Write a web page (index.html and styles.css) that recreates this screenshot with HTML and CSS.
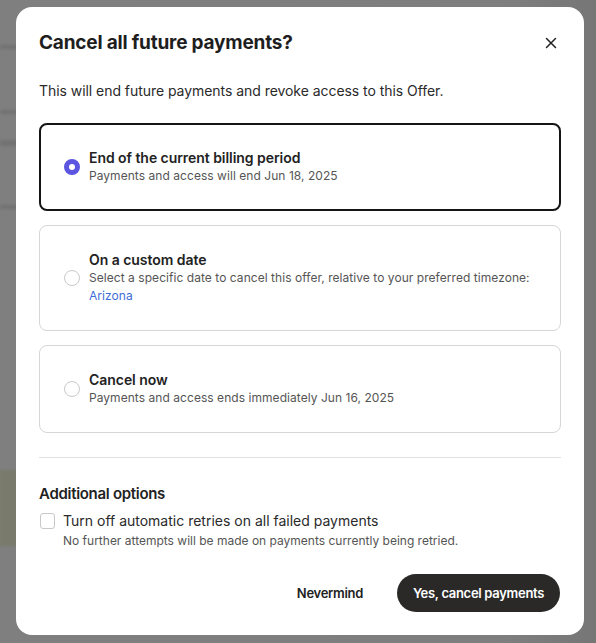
FILE: index.html
```html
<!DOCTYPE html>
<html lang="en">
<head>
<meta charset="utf-8">
<title>Cancel all future payments?</title>
<link rel="stylesheet" href="styles.css">
</head>
<body>
<div class="page">
  <div class="page-line l1"></div>
  <div class="page-line l2"></div>
  <div class="page-line l3"></div>
  <div class="page-line l4"></div>
  <div class="page-card"></div>
</div>
<div class="overlay">
  <div class="modal">
    <div class="modal-header">
      <h2 class="modal-title">Cancel all future payments?</h2>
      <button class="close-btn" aria-label="Close">
        <svg width="12" height="12" viewBox="0 0 12 12"><path d="M1.5 1.5L10.5 10.5M10.5 1.5L1.5 10.5" stroke="#222" stroke-width="1.5" stroke-linecap="round"/></svg>
      </button>
    </div>
    <p class="modal-desc">This will end future payments and revoke access to this Offer.</p>
    <div class="options">
      <label class="option selected">
        <span class="radio checked"></span>
        <span class="option-text">
          <span class="option-title">End of the current billing period</span>
          <span class="option-sub">Payments and access will end Jun 18, 2025</span>
        </span>
      </label>
      <label class="option">
        <span class="radio"></span>
        <span class="option-text">
          <span class="option-title">On a custom date</span>
          <span class="option-sub">Select a specific date to cancel this offer, relative to your preferred timezone:<br><a class="link" href="#">Arizona</a></span>
        </span>
      </label>
      <label class="option">
        <span class="radio"></span>
        <span class="option-text">
          <span class="option-title">Cancel now</span>
          <span class="option-sub">Payments and access ends immediately Jun 16, 2025</span>
        </span>
      </label>
    </div>
    <hr class="divider">
    <h3 class="section-title">Additional options</h3>
    <label class="check-row">
      <span class="checkbox"></span>
      <span class="check-text">
        <span class="check-title">Turn off automatic retries on all failed payments</span>
        <span class="check-sub">No further attempts will be made on payments currently being retried.</span>
      </span>
    </label>
    <div class="actions">
      <button class="btn btn-ghost">Nevermind</button>
      <button class="btn btn-primary">Yes, cancel payments</button>
    </div>
  </div>
</div>
</body>
</html>
```

FILE: styles.css
```css
* { box-sizing: border-box; }
html, body { margin: 0; padding: 0; }
body {
  width: 596px;
  height: 643px;
  overflow: hidden;
  background: #7d7d7d;
  font-family: Inter, "Noto Sans", sans-serif;
  color: #222;
}
.page {
  position: absolute;
  inset: 0;
  background: linear-gradient(90deg, #7f7f7f 0%, #7e7e7e 85%, #767676 100%);
}
.page-line {
  position: absolute;
  left: 0;
  width: 20px;
  height: 4px;
  background: #727272;
  filter: blur(1.5px);
}
.l1 { top: 45px; }
.l2 { top: 110px; }
.l3 { top: 140px; height: 6px; }
.l4 { top: 205px; }
.page-card {
  position: absolute;
  left: 0;
  top: 470px;
  width: 20px;
  height: 76px;
  background: #7a7a6c;
  filter: blur(1px);
}
.overlay {
  position: fixed;
  inset: 0;
  display: flex;
  justify-content: flex-start;
  padding: 7px 0 0 16px;
}
.modal {
  width: 568px;
  height: 628px;
  background: #fff;
  border-radius: 16px;
  padding: 24px 23px 0 23px;
  display: flex;
  flex-direction: column;
}
.modal-header {
  display: flex;
  align-items: center;
  justify-content: space-between;
  height: 24px;
}
.modal-title {
  margin: 0;
  font-size: 19px;
  font-weight: 700;
  letter-spacing: -0.2px;
  color: #1e1e1e;
  line-height: 24px;
}
.close-btn {
  border: 0;
  background: none;
  padding: 0;
  width: 12px;
  height: 12px;
  margin-right: 4px;
  display: flex;
  cursor: pointer;
}
.modal-desc {
  margin: 26px 0 0;
  font-size: 14px;
  line-height: 20px;
  color: #2a2a2a;
  letter-spacing: -0.05px;
}
.options {
  display: flex;
  flex-direction: column;
  gap: 14px;
  margin-top: 22px;
}
.option {
  display: flex;
  align-items: center;
  gap: 9px;
  border: 1px solid #d6d6d6;
  border-radius: 8px;
  padding: 25px 24px 25px 24px;
  cursor: pointer;
}
.option.selected {
  border: 2px solid #151515;
  padding: 24px 23px 24px 23px;
}
.radio {
  flex: none;
  width: 16px;
  height: 16px;
  border-radius: 50%;
  border: 1px solid #c9c9c9;
  background: #fff;
}
.radio.checked {
  border: 5px solid #5b55e0;
  background: #fff;
}
.option-text {
  display: flex;
  flex-direction: column;
}
.option-title {
  font-size: 14px;
  font-weight: 600;
  line-height: 18px;
  color: #222;
  letter-spacing: -0.05px;
}
.option-sub {
  font-size: 12px;
  line-height: 18px;
  color: #555;
  letter-spacing: 0.05px;
}
.link {
  color: #3e6ed6;
  text-decoration: none;
}
.divider {
  border: 0;
  border-top: 1px solid #e2e2e2;
  margin: 24px 0 0;
}
.section-title {
  margin: 26px 0 0;
  font-size: 15px;
  font-weight: 600;
  letter-spacing: -0.3px;
  line-height: 20px;
  color: #222;
}
.check-row {
  display: flex;
  align-items: flex-start;
  gap: 8px;
  margin-top: 7px;
  padding-left: 1px;
}
.checkbox {
  flex: none;
  width: 15px;
  height: 16px;
  margin-top: 2px;
  border: 1px solid #c8c8c8;
  border-radius: 3px;
}
.check-text {
  display: flex;
  flex-direction: column;
}
.check-title {
  font-size: 14px;
  line-height: 20px;
  color: #2a2a2a;
}
.check-sub {
  font-size: 12px;
  line-height: 20px;
  color: #555;
}
.actions {
  display: flex;
  justify-content: flex-end;
  align-items: center;
  gap: 34px;
  margin-top: 23px;
}
.btn {
  border: 0;
  font-family: Inter, "Noto Sans", sans-serif;
  font-size: 13px;
  font-weight: 600;
  letter-spacing: -0.3px;
  white-space: nowrap;
  cursor: pointer;
}
.btn-ghost {
  background: none;
  color: #222;
  padding: 0;
}
.btn-primary {
  background: #2a2928;
  color: #fff;
  height: 38px;
  border-radius: 19px;
  padding: 0 10px;
  width: 163px;
  margin-right: 1px;
}
```
